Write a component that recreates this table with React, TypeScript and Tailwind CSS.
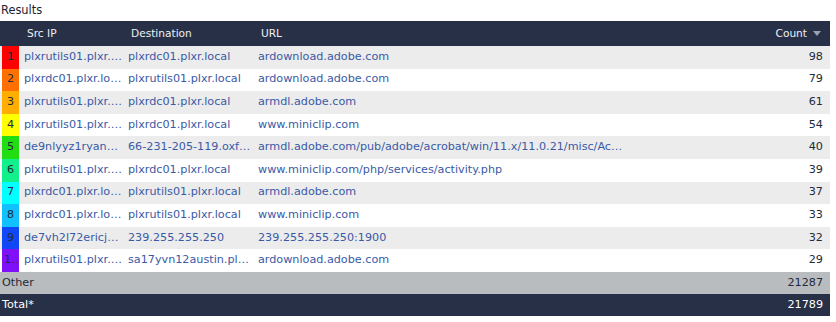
import React from "react";

const rows = [
  { n: "1", c: "#ff0000", src: "plxrutils01.plxr.local", dst: "plxrdc01.plxr.local", url: "ardownload.adobe.com", count: 98 },
  { n: "2", c: "#ff7000", src: "plxrdc01.plxr.local", dst: "plxrutils01.plxr.local", url: "ardownload.adobe.com", count: 79 },
  { n: "3", c: "#ffae00", src: "plxrutils01.plxr.local", dst: "plxrdc01.plxr.local", url: "armdl.adobe.com", count: 61 },
  { n: "4", c: "#ffff00", src: "plxrutils01.plxr.local", dst: "plxrdc01.plxr.local", url: "www.miniclip.com", count: 54 },
  { n: "5", c: "#22dd11", src: "de9nlyyz1ryansmith.plxr.local", dst: "66-231-205-119.oxfordnetworks.net", url: "armdl.adobe.com/pub/adobe/acrobat/win/11.x/11.0.21/misc/AcroRdrDCUpd.msp", count: 40 },
  { n: "6", c: "#11f08a", src: "plxrutils01.plxr.local", dst: "plxrdc01.plxr.local", url: "www.miniclip.com/php/services/activity.php", count: 39 },
  { n: "7", c: "#00ffff", src: "plxrdc01.plxr.local", dst: "plxrutils01.plxr.local", url: "armdl.adobe.com", count: 37 },
  { n: "8", c: "#10c0ff", src: "plxrdc01.plxr.local", dst: "plxrutils01.plxr.local", url: "www.miniclip.com", count: 33 },
  { n: "9", c: "#1048f8", src: "de7vh2l72ericjones.plxr.local", dst: "239.255.255.250", url: "239.255.255.250:1900", count: 32 },
  { n: "10", c: "#8010f8", src: "plxrutils01.plxr.local", dst: "sa17yvn12austin.plxr.local", url: "ardownload.adobe.com", count: 29 },
];

export default function App() {
  return (
    <div
      className="w-[836px] h-[322px] bg-white text-[11.2px]"
      style={{ fontFamily: '"DejaVu Sans", Verdana, sans-serif' }}
    >
      <div className="h-[21px] pl-[1px] flex items-center text-[11.4px] text-[#1c2233]">Results</div>
      <div className="w-[830px]">
        <div className="h-[25px] bg-[#273047] text-[#eef1f5] text-[10.6px] flex items-center">
          <div className="w-[20px] shrink-0" />
          <div className="w-[104px] shrink-0 pl-[7px]">Src IP</div>
          <div className="w-[130px] shrink-0 pl-[7px]">Destination</div>
          <div className="flex-1 pl-[7px]">URL</div>
          <div className="w-[120px] shrink-0 flex items-center justify-end pr-[9px] gap-[6px]">
            <span>Count</span>
            <svg width="8" height="5" viewBox="0 0 8 5">
              <path d="M0 0 L8 0 L4 5 Z" fill="#9ba3b0" />
            </svg>
          </div>
        </div>
        {rows.map((r, i) => (
          <div
            key={r.n}
            className={`h-[22.6px] flex items-stretch ${i % 2 === 0 ? "bg-[#ececec]" : "bg-white"}`}
          >
            <div className="w-[20px] shrink-0 pl-[2px] pr-[1px] flex">
              <div
                className="flex-1 flex items-center justify-center px-[2px] text-[#222a3a] overflow-hidden"
                style={{ backgroundColor: r.c }}
              >
                <span className="block w-full overflow-hidden text-ellipsis whitespace-nowrap text-center">{r.n}</span>
              </div>
            </div>
            <div className="w-[104px] shrink-0 pl-[4px] pr-[2px] flex items-center text-[#3a5aa6] overflow-hidden">
              <span className="block w-full overflow-hidden text-ellipsis whitespace-nowrap">{r.src}</span>
            </div>
            <div className="w-[130px] shrink-0 pl-[4px] pr-[3px] flex items-center text-[#3a5aa6] overflow-hidden">
              <span className="block w-full overflow-hidden text-ellipsis whitespace-nowrap">{r.dst}</span>
            </div>
            <div className="w-[372px] shrink-0 pl-[4px] pr-[3px] flex items-center text-[#3a5aa6] overflow-hidden">
              <span className="block w-full overflow-hidden text-ellipsis whitespace-nowrap">{r.url}</span>
            </div>
            <div className="flex-1 flex items-center justify-end pr-[7px] text-[#222a3a]">{r.count}</div>
          </div>
        ))}
        <div className="h-[22px] bg-[#b9bcbe] text-[#222a3a] flex items-center justify-between pl-[2px] pr-[7px]">
          <span>Other</span>
          <span>21287</span>
        </div>
        <div className="h-[22px] bg-[#273047] text-white flex items-center justify-between pl-[2px] pr-[7px]">
          <span>Total*</span>
          <span>21789</span>
        </div>
      </div>
    </div>
  );
}
